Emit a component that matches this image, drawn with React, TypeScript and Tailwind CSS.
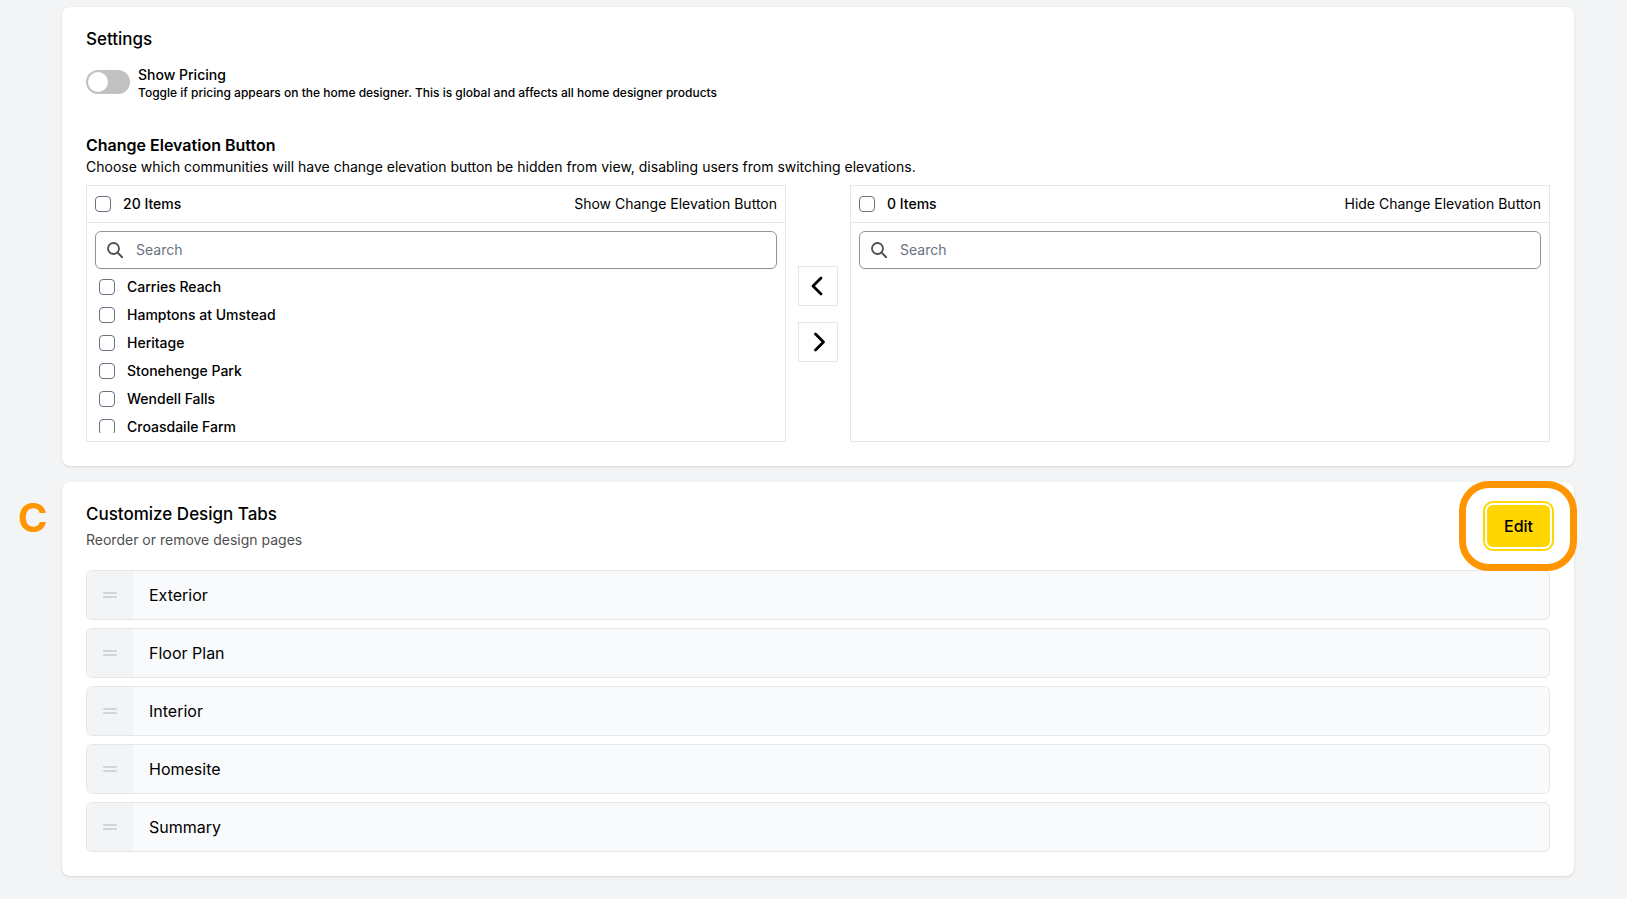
import { useState } from "react";

const communities = [
  "Carries Reach",
  "Hamptons at Umstead",
  "Heritage",
  "Stonehenge Park",
  "Wendell Falls",
  "Croasdaile Farm",
];

const tabs = ["Exterior", "Floor Plan", "Interior", "Homesite", "Summary"];

const CHECKBOX = "size-4 shrink-0 appearance-none rounded border border-gray-500 bg-white checked:bg-gray-500";

function SearchIcon() {
  return (
    <svg viewBox="0 0 16 16" className="size-4 shrink-0" aria-hidden="true">
      <circle cx="6.5" cy="6.5" r="5.5" fill="none" stroke="#4f4f4f" strokeWidth="1.8" />
      <path d="M10.6 10.6 L15.2 15.2" stroke="#4f4f4f" strokeWidth="2" strokeLinecap="round" />
    </svg>
  );
}

function Chevron({ d }: { d: string }) {
  return (
    <svg viewBox="0 0 24 24" className="size-6" fill="none" stroke="black" strokeWidth="2.8" strokeLinecap="round" strokeLinejoin="round" aria-hidden="true">
      <path d={d} />
    </svg>
  );
}

function TransferPanel({ id, label, count, items }: { id: string; label: string; count: number; items: string[] }) {
  return (
    <div className="flex-1 border border-gray-200">
      <div className="flex h-[37px] items-center justify-between border-b border-gray-200 px-2">
        <label className="flex items-center gap-3 font-medium">
          <input type="checkbox" className={CHECKBOX} />
          {count} Items
        </label>
        <span>{label}</span>
      </div>
      <div className="p-2">
        <div className="flex h-[38px] items-center gap-[13px] rounded-md border border-[#949494] px-[11px] shadow-xs">
          <SearchIcon />
          <input
            id={id}
            type="text"
            aria-label={`Search ${label}`}
            placeholder="Search"
            className="w-full bg-transparent outline-none placeholder:text-gray-500"
          />
        </div>
        <ul className="mt-1 h-40 overflow-hidden px-1">
          {items.map((name) => (
            <li key={name}>
              <label className="flex h-7 items-center gap-3 leading-3 font-medium">
                <input type="checkbox" className={CHECKBOX} />
                {name}
              </label>
            </li>
          ))}
        </ul>
      </div>
    </div>
  );
}

function Settings() {
  const [pricing, setPricing] = useState(false);
  return (
    <section className="rounded-lg bg-white p-6 shadow-sm">
      <h2 className="text-[17px] leading-4 font-medium">Settings</h2>
      <label className="mt-[18px] flex gap-2">
        <input
          type="checkbox"
          role="switch"
          checked={pricing}
          onChange={(e) => setPricing(e.target.checked)}
          className="mt-[5px] h-6 w-11 shrink-0 appearance-none rounded-full bg-[#c1c1c1] before:m-[2px] before:block before:size-5 before:rounded-full before:bg-white checked:bg-[#ffd600] checked:before:ml-[22px]"
        />
        <span className="flex flex-col font-medium">
          <span className="leading-5">Show Pricing</span>
          <span className="text-xs leading-4">
            Toggle if pricing appears on the home designer. This is global and affects all home designer products
          </span>
        </span>
      </label>
      <h3 className="mt-8 text-base font-semibold">Change Elevation Button</h3>
      <p>Choose which communities will have change elevation button be hidden from view, disabling users from switching elevations.</p>
      <div className="mt-2 flex gap-3">
        <TransferPanel id="show-search" label="Show Change Elevation Button" count={20} items={communities} />
        <div className="flex flex-col justify-center gap-4">
          <button type="button" aria-label="Move left" className="flex size-10 items-center justify-center border border-gray-200">
            <Chevron d="M15 4 L7 12 L15 20" />
          </button>
          <button type="button" aria-label="Move right" className="flex size-10 items-center justify-center border border-gray-200">
            <Chevron d="M9.5 4 L17.5 12 L9.5 20" />
          </button>
        </div>
        <TransferPanel id="hide-search" label="Hide Change Elevation Button" count={0} items={[]} />
      </div>
    </section>
  );
}

function DesignTabs() {
  return (
    <section className="relative rounded-lg bg-white p-6 shadow-sm">
      <span className="absolute top-3 -left-11 text-[40px] leading-12 font-bold text-[#ff9500]">C</span>
      <div className="flex h-10 justify-between">
        <div>
          <h2 className="text-[17px] leading-4 font-medium">Customize Design Tabs</h2>
          <p className="mt-[10px] leading-4 text-[#4f4f4f]">Reorder or remove design pages</p>
        </div>
        <div className="relative self-center">
          <button type="button" className="block h-[42px] rounded-md bg-[#ffd600] px-[17px] text-base font-medium ring-2 ring-[#ffd600] ring-offset-2">
            Edit
          </button>
          <div className="pointer-events-none absolute -inset-y-6 -right-[27px] -left-7 rounded-[30px] border-7 border-[#ff9500]" />
        </div>
      </div>
      <ul className="mt-6 flex flex-col gap-2 text-base">
        {tabs.map((tab) => (
          <li key={tab} className="flex h-[50px] items-center overflow-hidden rounded-md border border-gray-200 bg-gray-50">
            <span className="flex w-[46px] items-center justify-center self-stretch bg-gray-100">
              <svg viewBox="0 0 14 6" className="h-[6px] w-[14px]" aria-hidden="true">
                <path d="M1 1 H13 M1 5 H13" stroke="#d1d5db" strokeWidth="2" strokeLinecap="round" />
              </svg>
            </span>
            <span className="pl-4">{tab}</span>
          </li>
        ))}
      </ul>
    </section>
  );
}

export default function App() {
  return (
    <main className="flex min-h-screen flex-col gap-4 bg-gray-100 pt-[7px] pr-[53px] pb-[23px] pl-[62px] font-['Inter','Liberation_Sans',sans-serif] text-sm text-black">
      <Settings />
      <DesignTabs />
    </main>
  );
}
